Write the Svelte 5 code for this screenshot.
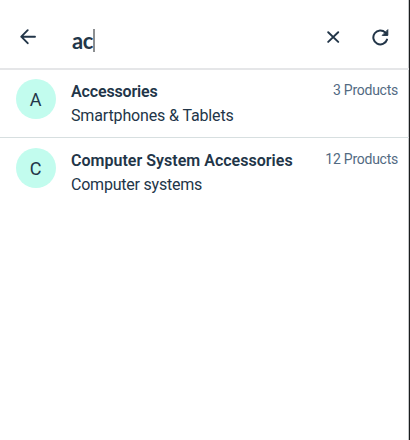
<script>
  const results = [
    { initial: 'A', title: 'Accessories', detail: 'Smartphones & Tablets', count: '3 Products' },
    { initial: 'C', title: 'Computer System Accessories', detail: 'Computer systems', count: '12 Products' }
  ];
</script>

<div class="screen">
  <header>
    <svg class="back" width="16" height="16" viewBox="0 0 16 16" fill="none" stroke="currentColor" stroke-width="1.9" stroke-linecap="round" stroke-linejoin="round">
      <path d="M15 7.7H1.3M7.7 1.2L1.3 7.7L7.7 14.2" />
    </svg>
    <div class="query"><span>ac</span><i class="caret"></i></div>
    <svg class="clear" width="13" height="13" viewBox="0 0 13 13" fill="none" stroke="currentColor" stroke-width="1.9" stroke-linecap="round">
      <path d="M1.2 1.2L11.2 10.9M11.2 1.2L1.2 10.9" />
    </svg>
    <svg class="refresh" width="17" height="17" viewBox="0 0 17 17" fill="none" stroke="currentColor" stroke-width="2" stroke-linecap="round">
      <path d="M15 10.6A7 7 0 1 1 13.4 3.6" />
      <path d="M15.8 1V6.4H10.6Z" fill="currentColor" stroke-width="1" stroke-linejoin="round" />
    </svg>
  </header>
  <ul>
    {#each results as item}
      <li>
        <div class="avatar">{item.initial}</div>
        <div class="text">
          <div class="title">{item.title}</div>
          <div class="detail">{item.detail}</div>
        </div>
        <div class="count">{item.count}</div>
      </li>
    {/each}
  </ul>
</div>

<style>
  .screen {
    box-sizing: border-box;
    width: 410px;
    height: 440px;
    background: #fff;
    border-right: 1px solid #1b1d1f;
    box-shadow: inset -1px 0 #c4c6c8;
    color: #223548;
    font-family: Roboto, "Noto Sans", sans-serif;
    overflow: hidden;
  }
  header {
    box-sizing: border-box;
    display: flex;
    align-items: flex-start;
    height: 70px;
    padding: 29px 20px 0 20px;
    border-bottom: 2px solid #e5e6e8;
  }
  .back { margin-right: 36px; }
  .query {
    display: flex;
    flex: 1;
    height: 23px;
    line-height: 23px;
    font-family: Lato, sans-serif;
    font-size: 22px;
    font-weight: 700;
    letter-spacing: -0.3px;
  }
  .caret { width: 2px; height: 23px; background: #8c8f91; }
  .clear { margin: 2px 32px 0 0; }
  ul { margin: 0; padding: 0; list-style: none; }
  li {
    box-sizing: border-box;
    display: flex;
    height: 68px;
    padding: 9px 11px 0 15.5px;
    border-bottom: 1px solid #d7dfe0;
  }
  li + li { height: 69px; padding-top: 10px; border: 0; }
  .avatar {
    width: 40px;
    height: 40px;
    border-radius: 50%;
    background: #c2fcee;
    font-size: 18px;
    line-height: 41px;
    text-align: center;
  }
  .text {
    flex: 1;
    margin-left: 15.5px;
    padding-top: 1px;
    font-size: 16px;
    line-height: 24px;
  }
  .title { font-weight: 600; letter-spacing: 0.02px; }
  li:first-child .title { letter-spacing: -0.15px; }
  .detail { letter-spacing: -0.14px; }
  li + li .detail { letter-spacing: -0.22px; }
  .count { font-size: 14px; line-height: 23px; letter-spacing: -0.25px; color: #526a82; }
</style>
